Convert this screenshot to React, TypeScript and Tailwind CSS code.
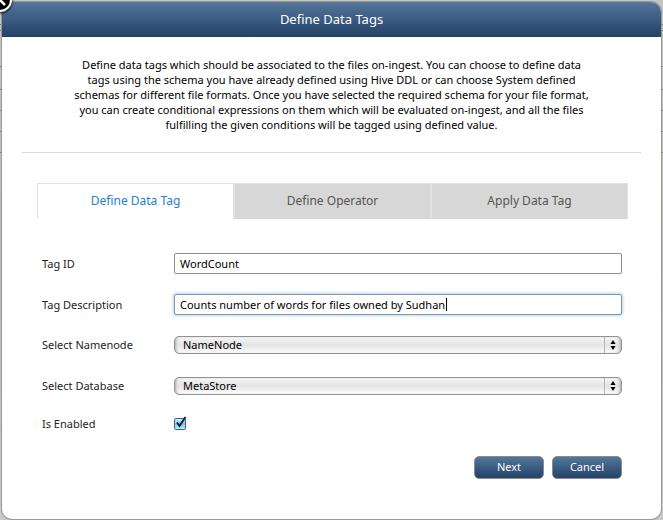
import { useState } from "react";
import type { ReactNode } from "react";

const tabs = ["Define Data Tag", "Define Operator", "Apply Data Tag"];

function Row({ id, label, children }: { id: string; label: string; children: ReactNode }) {
  return (
    <div className="flex items-center">
      <label htmlFor={id} className="w-[132px] shrink-0 text-[11px] leading-4 text-[#222]">
        {label}
      </label>
      {children}
    </div>
  );
}

function Select({ id, value }: { id: string; value: string }) {
  return (
    <div className="relative h-[18px] flex-1">
      <select
        id={id}
        defaultValue={value}
        className="block h-full w-full appearance-none rounded-[5px] border border-[#929292] bg-linear-to-b from-[#f5f5f5] via-[#e4e4e4] to-[#fcfcfc] pl-2 text-[11px] leading-4 text-black shadow-[inset_3px_0_3px_-2px_#aaa,inset_-3px_0_3px_-2px_#aaa] outline-none"
      >
        <option>{value}</option>
      </select>
      <svg className="pointer-events-none absolute top-px right-0 h-4 w-[18px]" viewBox="0 0 18 16">
        <path d="M.5 0v16" stroke="#b5b5b5" />
        <path d="M9 3l2.600 4H6.400zM9 13l2.600-4H6.400z" fill="#000" />
      </svg>
    </div>
  );
}

const actionClass =
  "h-[23px] w-[70px] rounded-[5px] border border-[#8b8b89] bg-linear-to-b from-[#53769b] to-[#234368] pb-0.5 text-[11px] leading-4 text-white";

export default function App() {
  const [active, setActive] = useState(0);
  const [enabled, setEnabled] = useState(true);

  return (
    <main className="relative min-h-screen overflow-hidden bg-[#c1c1bc] px-[2px] pt-[2px] pb-px font-['Noto_Sans','Open_Sans',sans-serif]">
      <div className="absolute inset-0 bg-linear-to-b from-[#c6c6c0] via-[#b9b9b9] to-[#c9c9c9]">
        {["top-6", "top-[30px]", "top-[66px]", "top-[89px]", "top-[110px]", "top-[131px]", "top-[152px]"].map((top) => (
          <div key={top} className={`absolute inset-x-0 h-px bg-[#777] ${top}`} />
        ))}
      </div>

      <section className="relative min-h-[517px] overflow-hidden rounded-[10px] rounded-tl-none bg-white shadow-[0_0_0_1px_#999]">
        <h1 className="flex h-[35px] items-center justify-center bg-linear-to-b from-[#54779b] to-[#224266] pb-0.5 text-[13px] leading-5 text-white">
          Define Data Tags
        </h1>

        <div className="mx-5 border-b border-[#d9d9d9] py-5 text-center text-[11px] leading-[15px] text-black">
          <p>
            Define data tags which should be associated to the files on-ingest. You can choose to define data
            <br />
            tags using the schema you have already defined using Hive DDL or can choose System defined
            <br />
            schemas for different file formats. Once you have selected the required schema for your file format,
            <br />
            you can create conditional expressions on them which will be evaluated on-ingest, and all the files
            <br />
            fulfilling the given conditions will be tagged using defined value.
          </p>
        </div>

        <div role="tablist" className="mt-[30px] mr-[33px] ml-[35px] grid h-9 grid-cols-3">
          {tabs.map((tab, i) => (
            <button
              key={tab}
              role="tab"
              aria-selected={active === i}
              onClick={() => setActive(i)}
              className={`border-x border-t border-[#e2e2e2] pb-0.5 text-xs leading-4 ${
                active === i ? "bg-white text-[#2380d3]" : "bg-[#d7d7d7] text-[#555]"
              }`}
            >
              {tab}
            </button>
          ))}
        </div>

        <form className="mt-[34px] mr-[39px] ml-10" onSubmit={(e) => e.preventDefault()}>
          <Row id="tag-id" label="Tag ID">
            <input
              id="tag-id"
              defaultValue="WordCount"
              className="h-[21px] min-w-0 flex-1 rounded-[2px] border border-[#8f8f8f] bg-white px-[5px] text-[11px] leading-4 text-black outline-none"
            />
          </Row>
          <div className="mt-5">
            <Row id="tag-description" label="Tag Description">
              <div className="relative h-[21px] flex-1">
                <input
                  id="tag-description"
                  defaultValue="Counts number of words for files owned by Sudhan"
                  className="block h-full w-full rounded-[2px] border border-[#8f8f8f] bg-white px-[5px] text-[11px] leading-4 text-black shadow-[0_0_3px_1px_#aedcff] outline-none"
                />
                <span className="absolute top-1 left-[272px] h-[13px] w-px bg-black" />
              </div>
            </Row>
          </div>
          <div className="mt-[21px]">
            <Row id="namenode" label="Select Namenode">
              <Select id="namenode" value="NameNode" />
            </Row>
          </div>
          <div className="mt-[23px]">
            <Row id="database" label="Select Database">
              <Select id="database" value="MetaStore" />
            </Row>
          </div>
          <div className="mt-[21px]">
            <Row id="enabled" label="Is Enabled">
              <span className="relative block h-3 w-3">
                <input
                  id="enabled"
                  type="checkbox"
                  checked={enabled}
                  onChange={(e) => setEnabled(e.target.checked)}
                  className="block h-3 w-3 appearance-none rounded-[2px] border border-[#3d6690] bg-linear-to-b from-[#d7ebfa] via-[#82bfe9] to-[#b8f5ff]"
                />
                {enabled && (
                  <svg className="pointer-events-none absolute -top-0.5 left-0 h-[14px] w-[14px]" viewBox="0 0 14 14">
                    <path d="M3 6.500L5.500 10L11.500 1" fill="none" stroke="#142638" strokeWidth="2" />
                  </svg>
                )}
              </span>
            </Row>
          </div>
          <div className="mt-6 flex justify-end gap-2">
            <button type="submit" className={actionClass}>Next</button>
            <button type="button" className={actionClass}>Cancel</button>
          </div>
        </form>
      </section>

      <button aria-label="Close" className="absolute -top-3 -left-3 h-6 w-6 rounded-full border-2 border-white bg-black shadow-[0_1px_3px_#000]">
        <svg className="h-5 w-5" viewBox="0 0 20 20">
          <path d="M6 6l9 9M14 6l-8 8" stroke="#fff" strokeWidth="2.500" />
        </svg>
      </button>
    </main>
  );
}
